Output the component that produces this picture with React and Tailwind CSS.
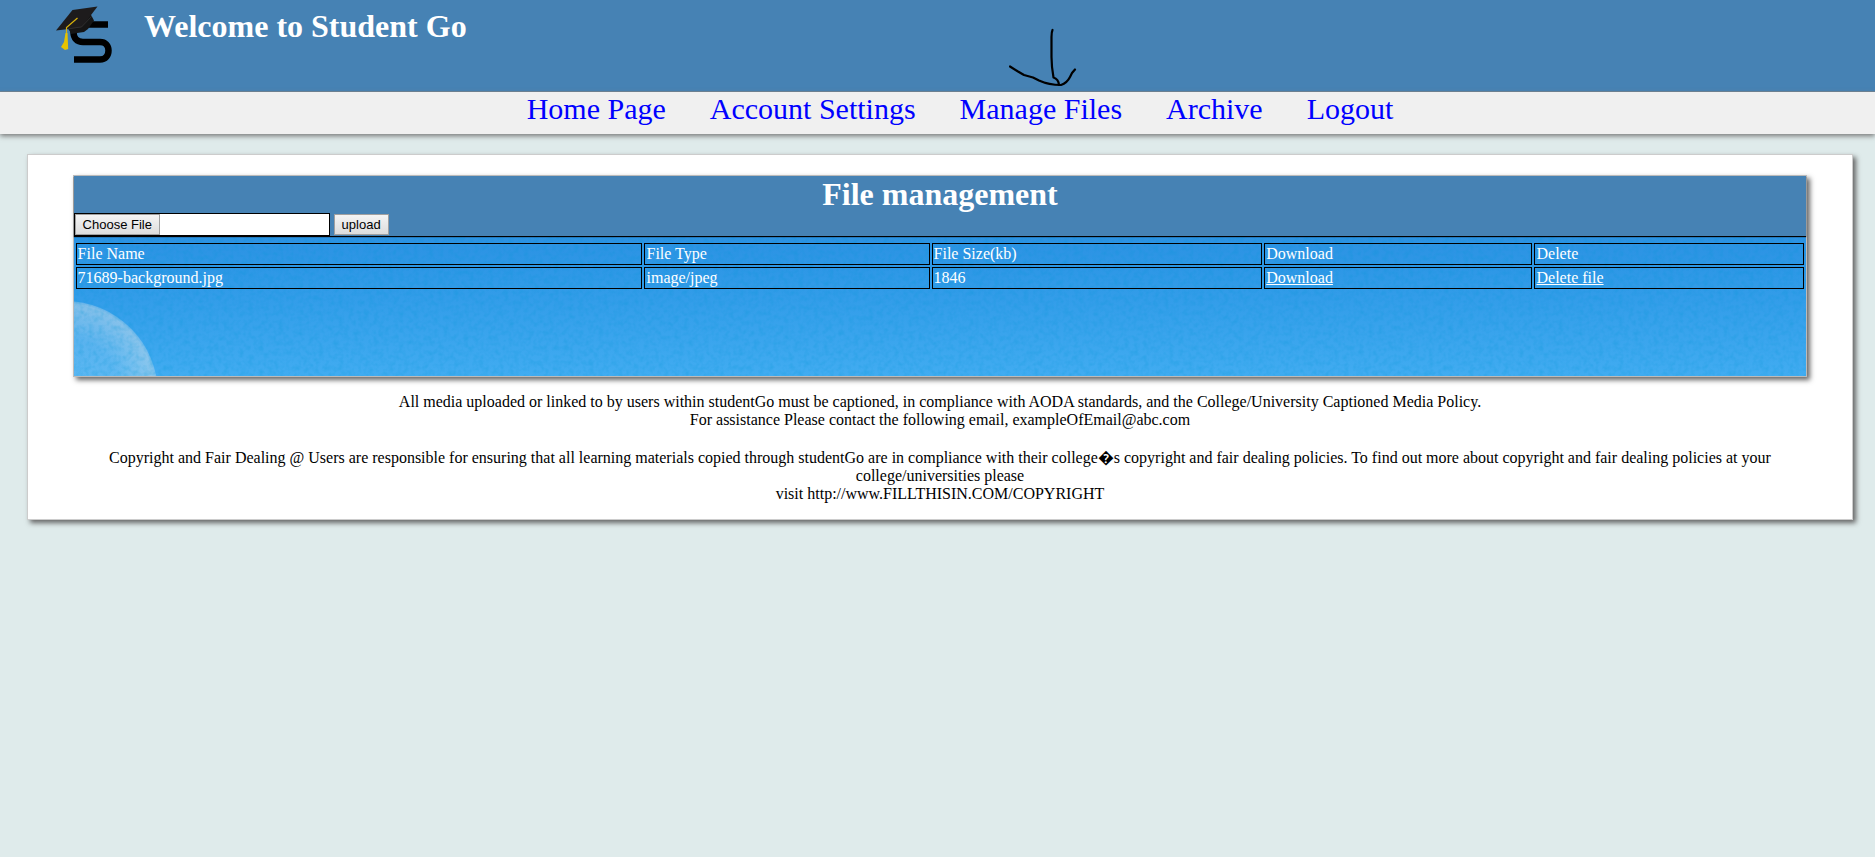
const links = ["Home Page", "Account Settings", "Manage Files", "Archive", "Logout"];

const files = [
  { name: "71689-background.jpg", type: "image/jpeg", size: "1846" },
];

const cell = "border border-black p-px text-left font-normal";

function Logo() {
  return (
    <svg viewBox="0 0 56 60" width="56" height="60" className="shrink-0" role="img" aria-label="Student Go">
      <path
        d="M52 21.500H24C18 21.500 17.500 25 17.500 29C17.500 35 21 39 27 39H44C49.500 39 52.500 42.500 52.500 47.500C52.500 52.500 49.500 56.500 44 56.500H18"
        fill="none"
        stroke="#000"
        strokeWidth="6.500"
      />
      <path d="M12 25.500L14 28.500L15 31C19 30.500 23 29.500 28 29L32 26L38 17.500L34 10Z" fill="#151515" />
      <path d="M0 27.500L16.500 7L41.500 3.500L25.500 24.500Z" fill="#1d1b1c" />
      <path d="M12 26L21 24.500L25.500 24L36 13" fill="none" stroke="#444" strokeWidth="0.500" />
      <path d="M21.500 15L10.500 24.500V32" fill="none" stroke="#d9b30c" strokeWidth="1.200" />
      <path d="M9.500 30H11.500L12.200 46L9 47L5 44L8 39Z" fill="#e6c300" />
    </svg>
  );
}

function Arrow() {
  return (
    <svg
      viewBox="0 0 70 60"
      width="70"
      height="60"
      className="pointer-events-none absolute -top-16 left-1/2 -translate-x-8"
      fill="none"
      stroke="#000"
      strokeWidth="2.200"
      strokeLinecap="round"
      strokeLinejoin="round"
      aria-hidden="true"
    >
      <path d="M43.500 2Q42.500 4 42.500 9V29Q42.500 38 44.500 49.500Q49.500 51 50 57" />
      <path d="M1 38.500L9 43.500L15 47L24 49.500L30 52.500Q40 57 52 57Q58 55 61 49L63 45L66 41.500" />
    </svg>
  );
}

function Sky() {
  return (
    <svg className="absolute inset-0 -z-10 h-full w-full" aria-hidden="true">
      <defs>
        <linearGradient id="sky" x1="0" y1="0" x2="0" y2="1">
          <stop offset="0" stopColor="#2c92e3" />
          <stop offset="0.300" stopColor="#2f99e7" />
          <stop offset="1" stopColor="#41acf1" />
        </linearGradient>
        <radialGradient id="orb">
          <stop offset="0" stopColor="#fff" stopOpacity="0.120" />
          <stop offset="0.600" stopColor="#e4eff4" stopOpacity="0.180" />
          <stop offset="0.970" stopColor="#dbe4ea" stopOpacity="0.480" />
          <stop offset="1" stopColor="#dbe4ea" stopOpacity="0.300" />
        </radialGradient>
        <filter id="grain" x="0" y="0" width="100%" height="100%">
          <feTurbulence type="fractalNoise" baseFrequency="0.200" numOctaves="2" seed="4" />
          <feColorMatrix values="0 0 0 0 0  0 0 0 0 0.300  0 0 0 0 0.650  2 0 0 0 -0.800" />
        </filter>
      </defs>
      <rect width="100%" height="100%" fill="url(#sky)" />
      <circle cx="-9" cy="158" r="93" fill="url(#orb)" />
      <rect width="100%" height="100%" filter="url(#grain)" opacity="0.250" />
    </svg>
  );
}

export default function App() {
  return (
    <div className="min-h-screen bg-[#dfebeb] font-['Liberation_Serif','Times_New_Roman',serif] text-base leading-[18px] text-black">
      <header className="flex h-23 items-start gap-8 border-b border-[#6a8296] bg-[#4682b4] pl-14">
        <div className="pt-[3px]">
          <Logo />
        </div>
        <h1 className="pt-2 text-[32px] leading-9 font-bold text-white">Welcome to Student Go</h1>
      </header>

      <nav className="h-[42px] bg-[#f0f0f0] shadow-[0_2px_5px_#777]">
        <ul className="flex justify-center gap-11 pl-[45px] text-[30px] leading-[34px] text-[#0000ff]">
          {links.map((label) => (
            <li key={label} className="relative">
              <a href="#">{label}</a>
              {label === "Manage Files" && <Arrow />}
            </li>
          ))}
        </ul>
      </nav>

      <main className="mt-5 mr-[22px] ml-[27px] border border-[#ccc] bg-white pt-5 pb-4 shadow-[3px_3px_5px_#666]">
        <section className="mx-auto box-content w-[95%] border border-[#bbb] text-white shadow-[3px_3px_5px_#666]">
          <div className="relative z-10 bg-[#4682b4] shadow-[0_1px_1px_#000]">
            <h2 className="text-center text-[32px] leading-[37px] font-bold">File management</h2>
            <form
              className="flex items-center gap-1 font-['Liberation_Sans',Arial,sans-serif] text-[13px] leading-4 text-black"
              onSubmit={(e) => e.preventDefault()}
            >
              <input
                type="file"
                aria-label="File to upload"
                className="h-[23px] w-64 border border-black bg-white text-[13px] text-transparent file:h-[21px] file:border file:border-solid file:border-[#a0a0a0] file:bg-linear-to-b file:from-[#f4f4f4] file:to-[#dddddd] file:px-[7px] file:text-[13px] file:text-black"
              />
              <button
                type="submit"
                className="h-[21px] border border-[#a0a0a0] bg-linear-to-b from-[#f4f4f4] to-[#dddddd] px-[7px] leading-4"
              >
                upload
              </button>
            </form>
          </div>
          <div className="relative isolate h-[140px] pt-[5px]">
            <Sky />
            <table className="w-full border-separate border-spacing-[2px]">
              <thead>
                <tr>
                  <th className={cell}>File Name</th>
                  <th className={cell}>File Type</th>
                  <th className={cell}>File Size(kb)</th>
                  <th className={cell}>Download</th>
                  <th className={cell}>Delete</th>
                </tr>
              </thead>
              <tbody>
                {files.map((file) => (
                  <tr key={file.name}>
                    <td className={cell}>{file.name}</td>
                    <td className={cell}>{file.type}</td>
                    <td className={cell}>{file.size}</td>
                    <td className={cell}><a href="#" className="underline">Download</a></td>
                    <td className={cell}><a href="#" className="underline">Delete file</a></td>
                  </tr>
                ))}
              </tbody>
            </table>
          </div>
        </section>

        <footer className="mx-auto mt-4 w-[95%] text-center">
          <p>
            All media uploaded or linked to by users within studentGo must be captioned, in compliance with AODA standards, and the College/University Captioned Media Policy.
            <br />
            For assistance Please contact the following email, exampleOfEmail@abc.com
          </p>
          <p className="mt-5">
            Copyright and Fair Dealing @ Users are responsible for ensuring that all learning materials copied through studentGo are in compliance with their college{"\uFFFD"}s copyright and fair dealing policies. To find out more about copyright and fair dealing policies at your college/universities please
            <br />
            visit http://www.FILLTHISIN.COM/COPYRIGHT
          </p>
        </footer>
      </main>
    </div>
  );
}
